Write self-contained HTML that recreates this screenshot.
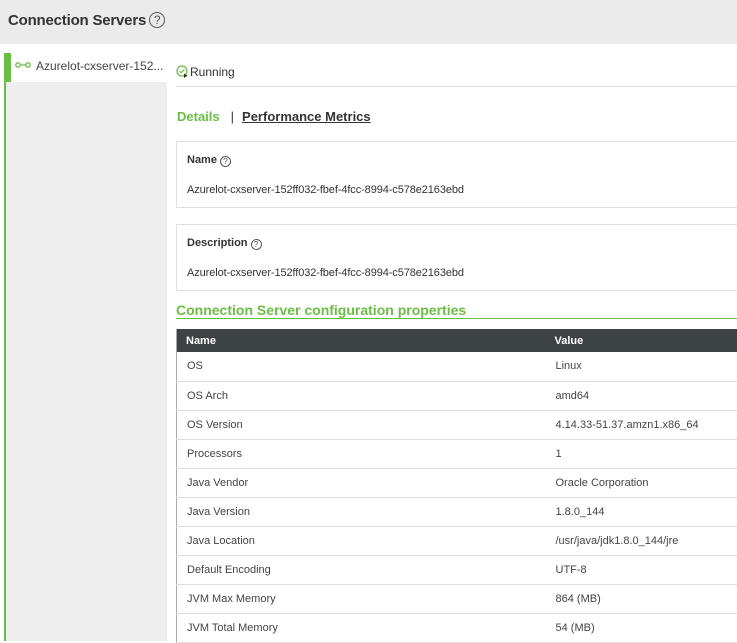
<!DOCTYPE html>
<html><head><style>
*{margin:0;padding:0;box-sizing:border-box}
body{width:737px;height:641px;overflow:hidden;background:#fff;font-family:"Liberation Sans",Arial,sans-serif;color:#333;position:relative}
.hdr{position:absolute;left:0;top:0;width:737px;height:44px;background:#ebebeb}
.hdr h1{position:absolute;left:8px;top:12px;font-size:15px;font-weight:bold;color:#333;letter-spacing:-0.2px}
.q{display:inline-block;border:1px solid #555;border-radius:50%;text-align:center;font-weight:normal;color:#555}
.hdr .q{width:16px;height:16px;font-size:12px;line-height:14px;vertical-align:1px;margin-left:3px}
.gl{position:absolute;left:4px;top:53px;width:2px;height:588px;background:#6cbd45}
.gb{position:absolute;left:4px;top:53px;width:7px;height:29px;background:#6cbd45}
.lp{position:absolute;left:6px;top:82px;width:161px;height:559px;background:#eeeeee}
.item{position:absolute;left:15px;top:59px;font-size:12px;color:#444}
.run{position:absolute;left:176px;top:65px;font-size:12px;color:#333}
.rl{position:absolute;left:176px;top:86px;width:561px;height:1px;background:#ddd}
.tabs{position:absolute;left:177px;top:109px;font-size:13px;font-weight:bold}
.box{position:absolute;left:176px;width:561px;height:67px;border:1px solid #e0e0e0;border-right:none}
.box .l{position:absolute;left:10px;top:12px;font-size:11px;font-weight:bold;color:#333}
.box .l .q{width:11px;height:11px;font-size:8px;line-height:9px;margin-left:3px;vertical-align:-1px}
.box .v{position:absolute;left:10px;top:42px;font-size:11px;color:#333;letter-spacing:-0.1px}
.sec{position:absolute;left:176px;top:302px;font-size:14px;font-weight:bold;color:#6cbd45}
.secl{position:absolute;left:176px;top:318px;width:561px;height:1px;background:#6cbd45}
table{position:absolute;left:176px;top:329px;width:561px;border-collapse:collapse;font-size:11px;border-left:1px solid #aaa}
th{background:#3d4244;color:#fff;text-align:left;height:23px;font-weight:bold;padding-left:9px}
td{height:29px;border-bottom:1px solid #ddd;padding-left:10px;color:#444}
td:first-child{width:369px}
th:first-child{width:369px}
</style></head><body>
<div class="hdr"><h1>Connection Servers<span class="q">?</span></h1></div>
<div class="gl"></div><div class="gb"></div><div class="lp"></div>
<div class="item"><svg width="16" height="8" style="vertical-align:1px;margin-right:5px"><circle cx="3" cy="4" r="2.2" fill="none" stroke="#6cbd45" stroke-width="1.3"/><circle cx="13" cy="4" r="2.2" fill="none" stroke="#6cbd45" stroke-width="1.3"/><line x1="5" y1="4" x2="11" y2="4" stroke="#6cbd45" stroke-width="1.3"/></svg>Azurelot-cxserver-152...</div>
<div class="run"><svg width="13" height="13" style="vertical-align:-2px;margin-right:1px"><circle cx="6" cy="6" r="5" fill="none" stroke="#6cbd45" stroke-width="1.3"/><path d="M3.5 6l1.8 1.8 3.2-3.4" fill="none" stroke="#6cbd45" stroke-width="1.2"/><path d="M8 8.5v4.5l3.5-2.2z" fill="#333"/></svg>Running</div>
<div class="rl"></div>
<div class="tabs"><span style="color:#6cbd45">Details</span><span style="font-weight:normal;color:#333;margin:0 8px 0 11px">|</span><span style="text-decoration:underline;color:#333">Performance Metrics</span></div>
<div class="box" style="top:141px"><div class="l">Name<span class="q">?</span></div><div class="v">Azurelot-cxserver-152ff032-fbef-4fcc-8994-c578e2163ebd</div></div>
<div class="box" style="top:224px"><div class="l">Description<span class="q">?</span></div><div class="v">Azurelot-cxserver-152ff032-fbef-4fcc-8994-c578e2163ebd</div></div>
<div class="sec">Connection Server configuration properties</div>
<div class="secl"></div>
<table>
<tr><th>Name</th><th>Value</th></tr>
<tr><td>OS</td><td>Linux</td></tr>
<tr><td>OS Arch</td><td>amd64</td></tr>
<tr><td>OS Version</td><td>4.14.33-51.37.amzn1.x86_64</td></tr>
<tr><td>Processors</td><td>1</td></tr>
<tr><td>Java Vendor</td><td>Oracle Corporation</td></tr>
<tr><td>Java Version</td><td>1.8.0_144</td></tr>
<tr><td>Java Location</td><td>/usr/java/jdk1.8.0_144/jre</td></tr>
<tr><td>Default Encoding</td><td>UTF-8</td></tr>
<tr><td>JVM Max Memory</td><td>864 (MB)</td></tr>
<tr><td>JVM Total Memory</td><td>54 (MB)</td></tr>
</table>
</body></html>
